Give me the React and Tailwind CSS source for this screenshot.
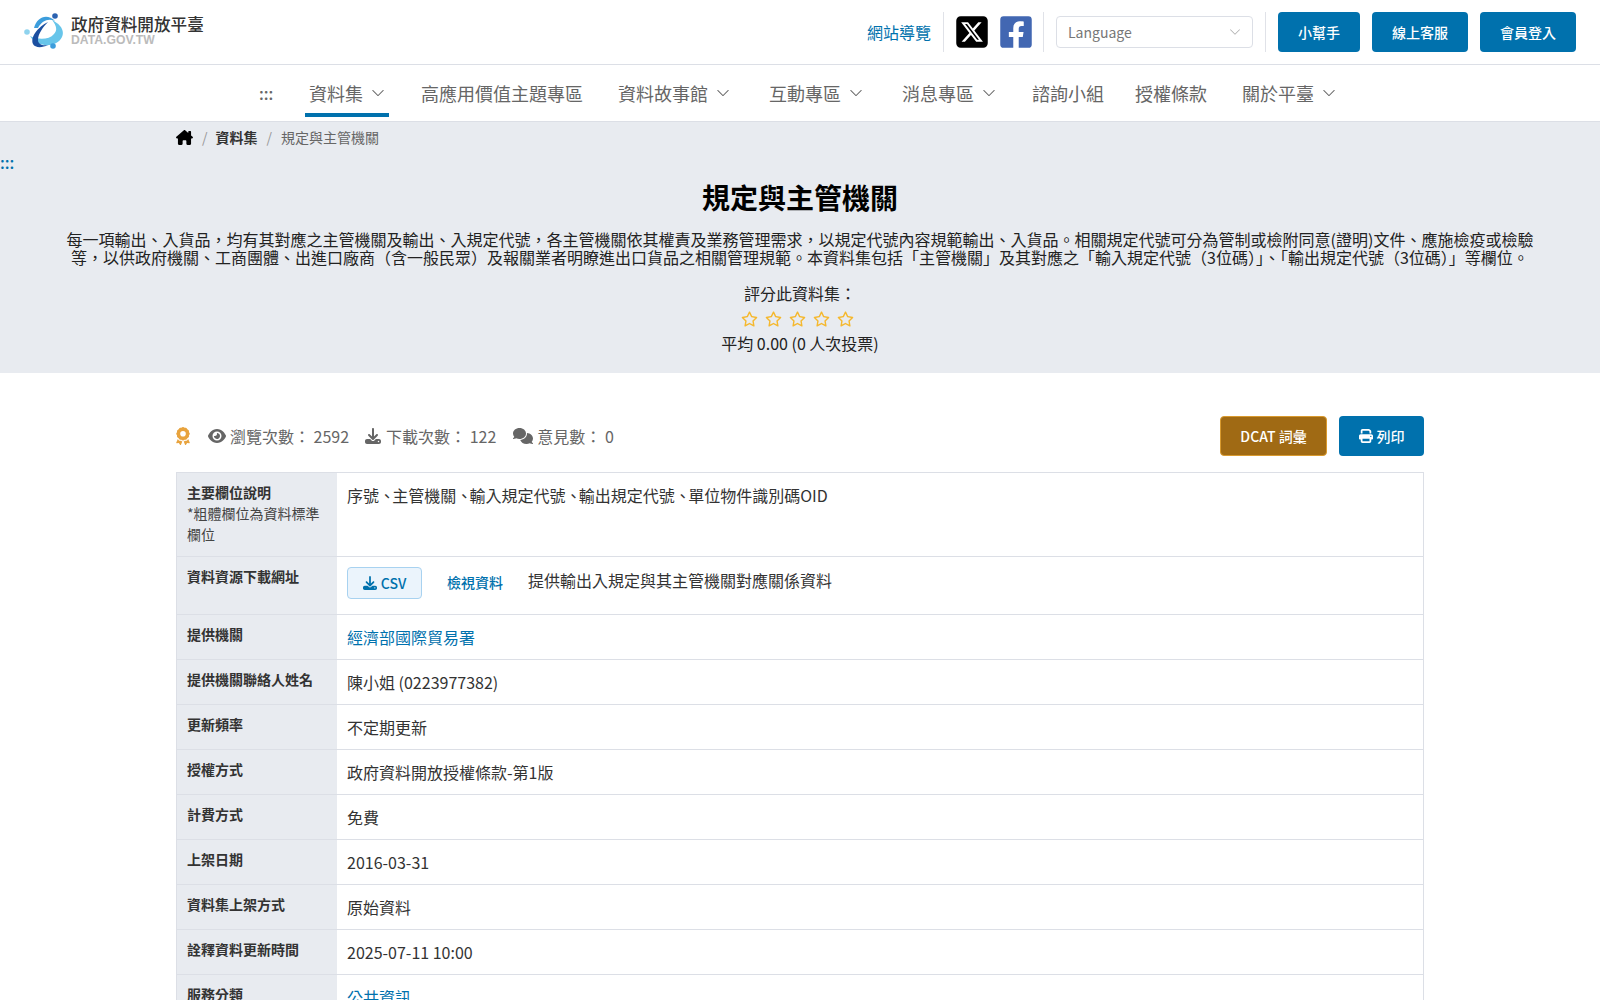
import { BsChevronDown } from "react-icons/bs";
import { FaFacebookSquare } from "react-icons/fa";
import { FaHouseChimney, FaEye, FaDownload, FaComments, FaPrint, FaAward, FaRegStar, FaSquareXTwitter } from "react-icons/fa6";

const NAV_ITEMS = [
  { label: "資料集", caret: true, active: true, margin: "ml-[32px]" },
  { label: "高應用價值主題專區", margin: "ml-[28px]" },
  { label: "資料故事館", caret: true, margin: "ml-[27px]" },
  { label: "互動專區", caret: true, margin: "ml-[31px]" },
  { label: "消息專區", caret: true, margin: "ml-[31px]" },
  { label: "諮詢小組", margin: "ml-[28px]" },
  { label: "授權條款", margin: "ml-[23px]" },
  { label: "關於平臺", caret: true, margin: "ml-[27px]" },
];

const ROWS = [
  { label: "提供機關", value: "經濟部國際貿易署", link: true },
  { label: "提供機關聯絡人姓名", value: "陳小姐 (0223977382)" },
  { label: "更新頻率", value: "不定期更新" },
  { label: "授權方式", value: "政府資料開放授權條款-第1版" },
  { label: "計費方式", value: "免費" },
  { label: "上架日期", value: "2016-03-31" },
  { label: "資料集上架方式", value: "原始資料" },
  { label: "詮釋資料更新時間", value: "2025-07-11 10:00" },
  { label: "服務分類", value: "公共資訊", link: true },
];

const FIELDS = ["序號", "主管機關", "輸入規定代號", "輸出規定代號", "單位物件識別碼OID"];

function Logo() {
  return (
    <svg width="40" height="37" viewBox="0 0 40 37" className="shrink-0">
      <path d="M6 23 C12 34 32 36 38 24 C41 17 36 11 28 7 C32 12 34 17 30 21 C25 27 14 27 6 23Z" fill="#67c5ea" />
      <path d="M24 9 C14 14 6 24 9 31 C11 35 18 35 24 32 C18 33 14 31 14 27 C14 21 19 14 24 9Z" fill="#1b4fa0" />
      <path d="M10 15 C13 4 23 0 31 8 C25 5 18 7 14 15Z" fill="#3c9ddc" />
      <circle cx="31" cy="3" r="2.8" fill="#2b62b0" />
      <circle cx="3" cy="19" r="2.8" fill="#8fd3ee" />
      <circle cx="29" cy="33" r="2.8" fill="#3c9ddc" />
    </svg>
  );
}

function Divider() {
  return <div className="w-px h-10 bg-[#e0e2e8]" />;
}

function NavItem({ item }) {
  return (
    <a
      href="#"
      className={`flex items-center self-start h-[52px] px-1 pt-[8px] border-b-4 ${item.margin} ${
        item.active ? "border-[#0071ad]" : "border-transparent"
      }`}
    >
      {item.label}
      {item.caret && <BsChevronDown className="ml-2 w-[14px] h-[14px]" />}
    </a>
  );
}

function TableRow({ label, children, className = "h-[45px]" }) {
  return (
    <div className={`flex border-b border-[#dcdfe6] ${className}`}>
      <div className="w-[160px] shrink-0 bg-[#e8ebf0] px-[10px] pt-[9px] text-sm font-bold text-[#333] leading-[21px]">
        {label}
      </div>
      <div className="flex-1 px-[10px] pt-[10px] leading-[24px]">{children}</div>
    </div>
  );
}

export default function App() {
  return (
    <div
      className="h-screen overflow-hidden bg-white text-[#333] text-base"
      style={{ fontFamily: '"Noto Sans CJK TC", "Noto Sans", sans-serif' }}
    >
      <header className="h-[65px] border-b border-[#dcdfe6] flex items-center justify-between pl-6 pr-6">
        <a href="#" className="flex items-center gap-[7px] -mt-[1px]">
          <Logo />
          <div className="mb-[3px]">
            <div className="text-[16.6px] leading-[19px] font-medium text-[#333] whitespace-nowrap">政府資料開放平臺</div>
            <div
              className="text-[12.2px] leading-[12px] font-bold text-[#bbb]"
              style={{ fontFamily: '"Liberation Sans", sans-serif' }}
            >
              DATA.GOV.TW
            </div>
          </div>
        </a>
        <div className="flex items-center">
          <a href="#" className="text-[#0071ad] mr-3">網站導覽</a>
          <Divider />
          <FaSquareXTwitter className="ml-[10px] w-[36px] h-[36px] text-black" />
          <FaFacebookSquare className="ml-[8px] w-[36px] h-[36px] text-[#4267b2]" />
          <div className="ml-[9px]"><Divider /></div>
          <div className="ml-3 w-[197px] h-8 border border-[#dcdfe6] rounded flex items-center justify-between pl-[11px] pr-[11px] text-sm text-[#777]">
            Language
            <BsChevronDown className="w-3 h-3 text-[#aaa]" />
          </div>
          <div className="ml-3"><Divider /></div>
          <div className="ml-3 flex gap-3">
            {["小幫手", "線上客服", "會員登入"].map((t) => (
              <a key={t} href="#" className="h-10 px-5 rounded bg-[#0071ad] text-white text-sm font-medium flex items-center">
                {t}
              </a>
            ))}
          </div>
        </div>
      </header>

      <nav className="h-[57px] flex items-center pl-[259px] text-lg text-[#666] border-b border-[#dcdfe6]">
        <span className="w-[14px] text-base font-medium">:::</span>
        {NAV_ITEMS.map((item) => (
          <NavItem key={item.label} item={item} />
        ))}
      </nav>

      <section className="h-[251px] bg-[#e8ebf0]">
        <div className="h-[30px] pl-[176px] flex items-center text-sm text-[#666]">
          <FaHouseChimney className="w-[17px] h-[15px] text-black" />
          <span className="ml-[9px] mr-[8px] text-[#999]">/</span>
          <a href="#" className="font-bold text-[#333]">資料集</a>
          <span className="mx-[9px] text-[#999]">/</span>
          <span>規定與主管機關</span>
        </div>
        <div className="mt-[2px] text-[#0071ad] text-base font-medium leading-4 h-4">:::</div>
        <h1 className="mt-[6px] text-center text-[28px] font-bold text-black leading-[42px]">規定與主管機關</h1>
        <p className="mt-[12px] px-[66px] text-center text-[#222] leading-[18.4px]">
          每一項輸出、入貨品，均有其對應之主管機關及輸出、入規定代號，各主管機關依其權責及業務管理需求，以規定代號內容規範輸出、入貨品。相關規定代號可分為管制或檢附同意(證明)文件、應施檢疫或檢驗等，以供政府機關、工商團體、出進口廠商（含一般民眾）及報關業者明瞭進出口貨品之相關管理規範。本資料集包括「主管機關」及其對應之「輸入規定代號（3位碼）」、「輸出規定代號（3位碼）」等欄位。
        </p>
        <div className="mt-[14px] text-center text-[#222] leading-6">評分此資料集：</div>
        <div className="mt-[6px] flex justify-center gap-[7px] pr-[6px] text-[#f5b82e]">
          {[0, 1, 2, 3, 4].map((i) => (
            <FaRegStar key={i} className="w-[17px] h-[16px]" />
          ))}
        </div>
        <div className="mt-[4px] text-center text-[#222] leading-6">平均 0.00 (0 人次投票)</div>
      </section>

      <main className="mx-[176px]">
        <div className="h-[99px] flex items-center justify-between pt-[27px] text-[#666]">
          <div className="flex items-center">
            <FaAward className="w-[14px] h-[18px] text-[#e8a33d] mr-[18px]" />
            <FaEye className="w-[18px] h-[18px] mr-[4px]" />
            <span>瀏覽次數： 2592</span>
            <FaDownload className="w-4 h-4 ml-4 mr-[5px]" />
            <span>下載次數： 122</span>
            <FaComments className="w-5 h-5 ml-[17px] mr-[4px]" />
            <span>意見數： 0</span>
          </div>
          <div className="flex gap-3 text-sm font-medium text-white">
            <a href="#" className="h-10 w-[107px] rounded bg-[#a06a14] border border-[#d99a2e] flex items-center justify-center">DCAT 詞彙</a>
            <a href="#" className="h-10 w-[85px] rounded bg-[#0071ad] flex items-center justify-center gap-1">
              <FaPrint className="w-[14px] h-[14px]" />列印
            </a>
          </div>
        </div>

        <div className="border border-b-0 border-[#dcdfe6]">
          <TableRow
            className="h-[84px]"
            label={
              <>
                主要欄位說明
                <div className="font-normal text-[#444]">*粗體欄位為資料標準欄位</div>
              </>
            }
          >
            {FIELDS.map((f, i) => (
              <span key={f}>
                {i > 0 && <span className="tracking-[-2.75px]">、</span>}
                {f}
              </span>
            ))}
          </TableRow>
          <TableRow className="h-[58px]" label="資料資源下載網址">
            <div className="flex items-start">
              <a href="#" className="h-8 w-[75px] rounded border border-[#a8d2f0] bg-[#ebf4fc] text-[#0071ad] text-sm flex items-center justify-center gap-1 font-medium">
                <FaDownload className="w-[14px] h-[14px]" />CSV
              </a>
              <a href="#" className="ml-[25px] mt-[5px] text-sm font-medium text-[#0071ad]">檢視資料</a>
              <span className="ml-[25px] mt-[1px]">提供輸出入規定與其主管機關對應關係資料</span>
            </div>
          </TableRow>
          {ROWS.map((row) => (
            <TableRow key={row.label} label={row.label}>
              {row.link ? <a href="#" className="text-[#0071ad]">{row.value}</a> : row.value}
            </TableRow>
          ))}
        </div>
      </main>
    </div>
  );
}
